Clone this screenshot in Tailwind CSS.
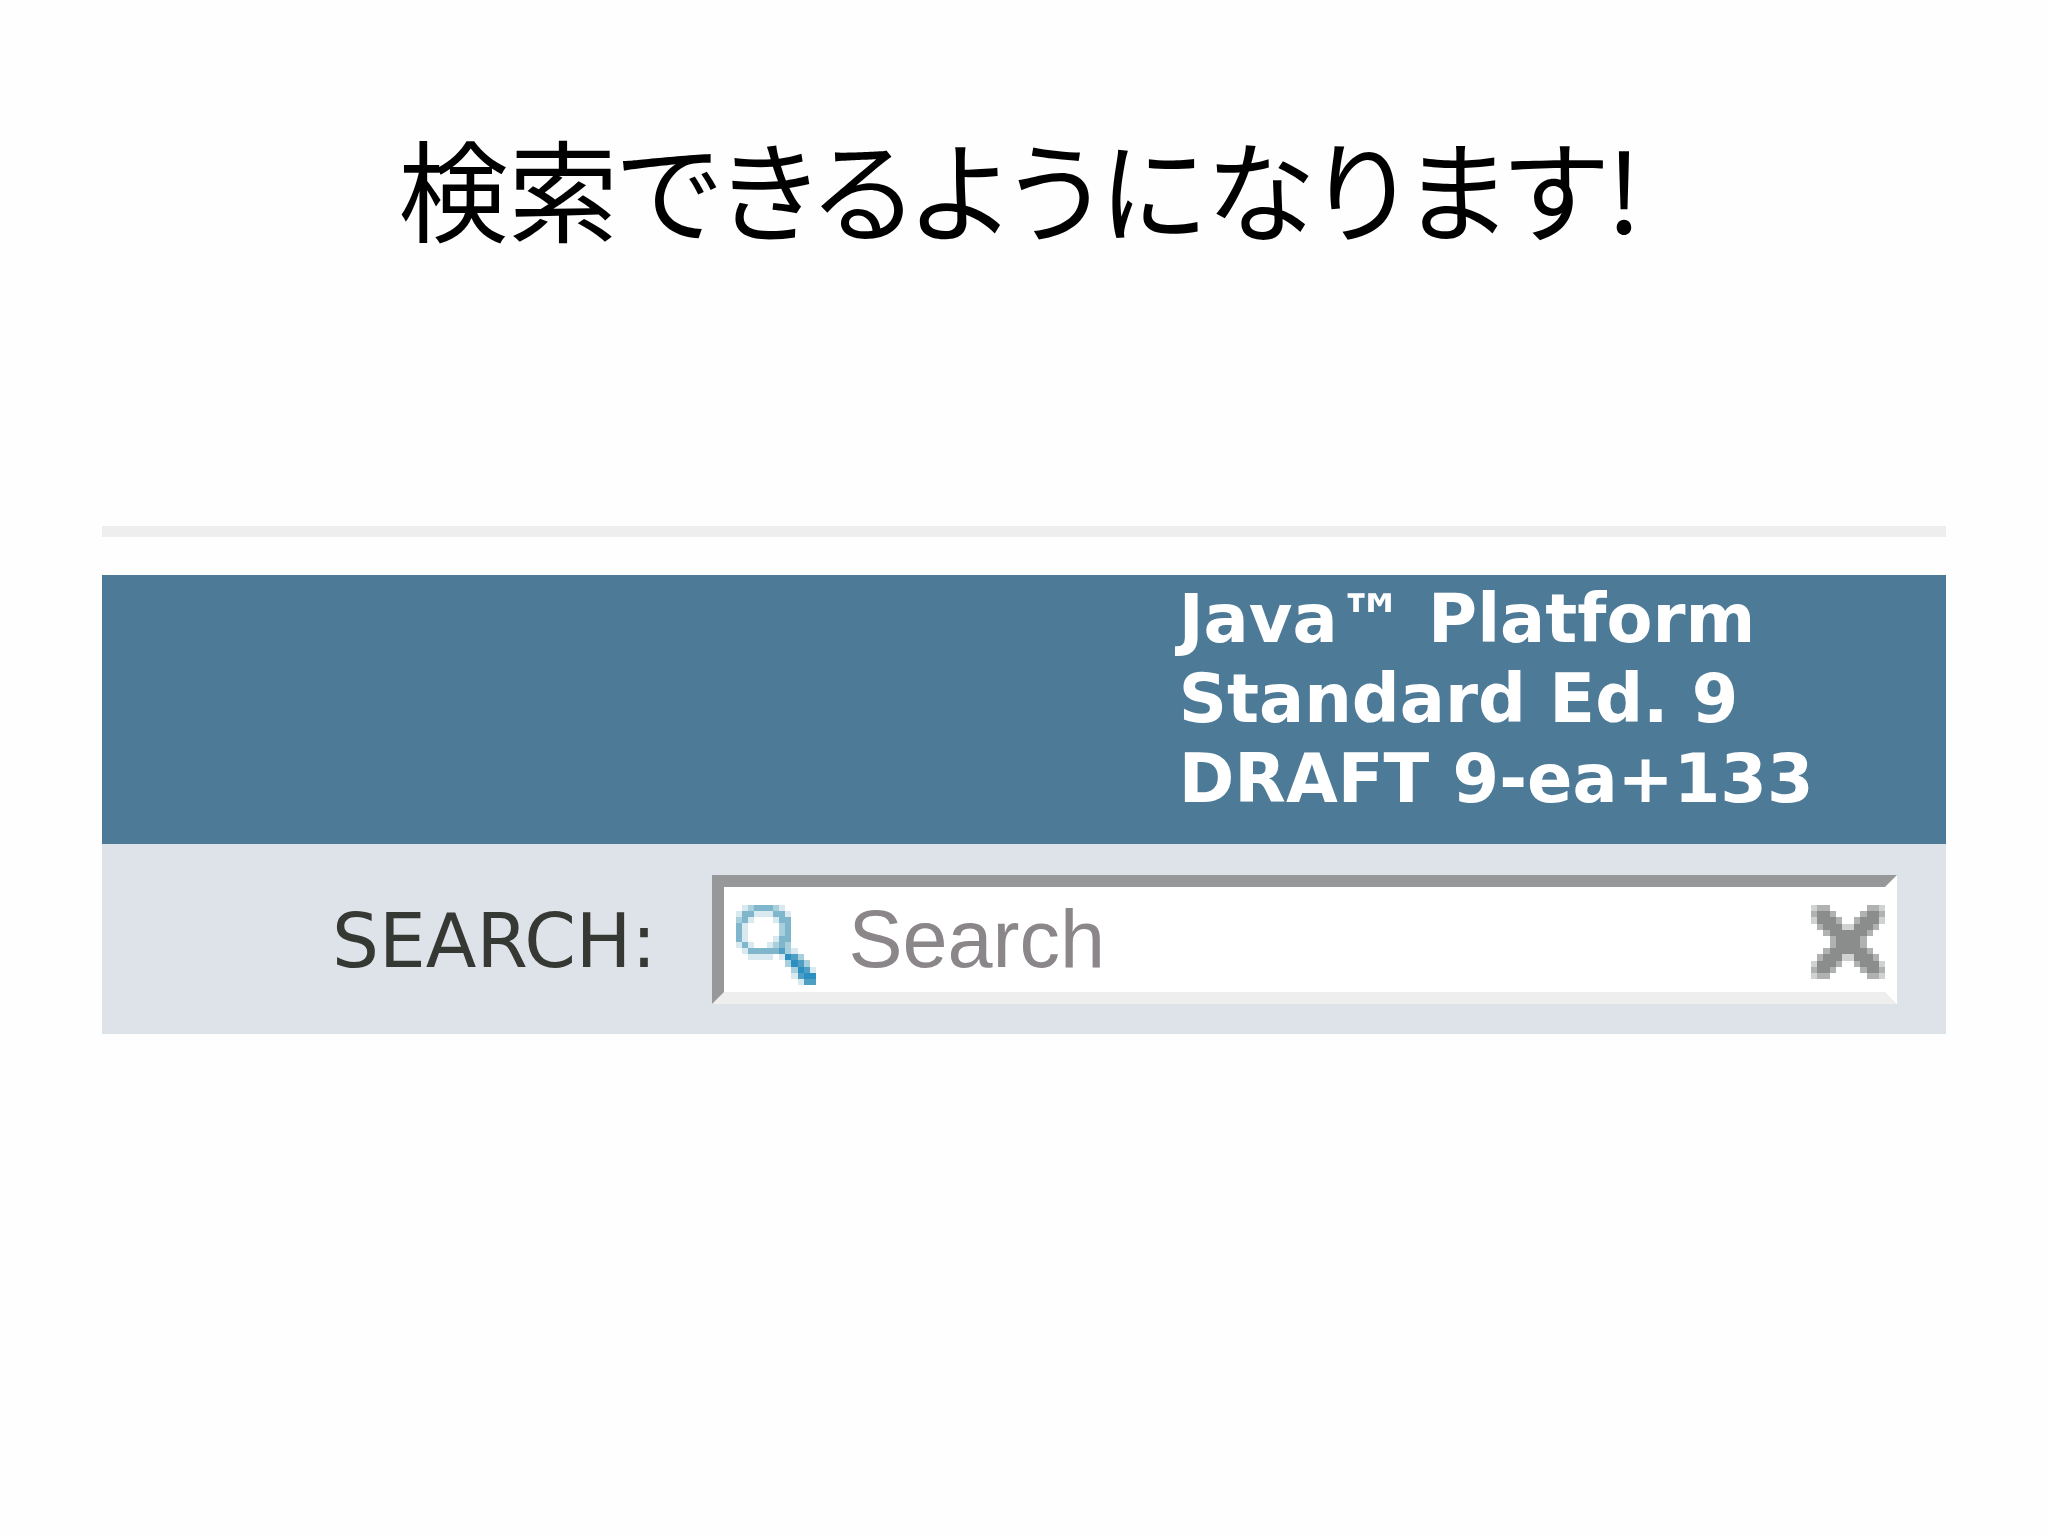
<!DOCTYPE html>
<html lang="ja">
<head>
  <meta charset="UTF-8" />
  <meta name="viewport" content="width=device-width, initial-scale=1" />
  <title>検索できるようになります!</title>
  <script src="https://cdn.jsdelivr.net/npm/@tailwindcss/browser@4"></script>
</head>
<body class="bg-[#fefefe] min-h-screen px-[5%] pt-[106px]">

  <h1 class="pr-2 text-center text-[110px] leading-[160px] text-black font-['Noto_Sans_CJK_JP',sans-serif] [font-feature-settings:'palt']">検索できるようになります!</h1>

  <main class="mt-[260px]">
    <hr class="h-[11px] border-0 bg-[#eeeeee]" />

    <header class="mt-[38px] flex h-[269px] justify-end bg-[#4d7a97] pt-1 pr-[132px]">
      <div class="font-['DejaVu_Sans',sans-serif] text-[67px] leading-[80px] font-bold text-white whitespace-nowrap">
        Java™ Platform<br />
        Standard Ed. 9<br />
        DRAFT 9-ea+133
      </div>
    </header>

    <form class="flex h-[190px] items-center justify-end bg-[#dee3e9] pr-[49px]" onsubmit="return false">
      <label for="search" class="mr-[56px] pt-1 font-['DejaVu_Sans',sans-serif] text-[74px] leading-[104px] text-[#353833]">SEARCH:</label>

      <div class="flex h-[129px] w-[66%] items-start border-[12px] border-t-[#979899] border-r-white border-b-[#eeeeee] border-l-[#979899] bg-white pl-3">
        <!-- magnifier, 13x13 grid -->
        <svg class="mt-[18px] h-[80px] w-[80px] shrink-0" viewBox="0 0 13 13" shape-rendering="crispEdges" aria-hidden="true">
          <path fill="#d9e9f0" d="M1 0h1v1h-1zM7 0h1v1h-1zM0 1h1v1h-1zM3 1h3v1h-3zM8 1h1v1h-1zM2 2h1v1h-1zM6 2h1v1h-1zM1 3h1v3h-1zM6 5h1v1h-1zM2 6h1v1h-1zM5 6h1v1h-1zM0 6h1v1h-1zM1 7h1v1h-1zM2 8h4v1h-4zM9 7h1v1h-1zM7 8h1v1h-1zM12 10h1v1h-1zM9 11h1v1h-1zM10 12h1v1h-1z" />
          <path fill="#a8cfdc" d="M2 0h1v1h-1zM6 0h1v1h-1zM0 2h1v1h-1zM7 3h1v2h-1zM6 6h1v1h-1zM8 6h1v1h-1zM8 7h1v1h-1zM10 8h1v1h-1zM8 9h1v1h-1zM9 10h1v1h-1zM11 9h1v1h-1z" />
          <path fill="#7fb6cb" d="M3 0h3v1h-3zM1 1h2v1h-2zM6 1h2v1h-2zM1 2h1v1h-1zM7 2h2v1h-2zM8 3h1v3h-1zM7 5h1v2h-1zM0 3h1v3h-1zM1 6h1v1h-1zM2 7h5v1h-5z" />
          <path fill="#4f9fc5" d="M7 7h1v1h-1zM9 8h1v1h-1zM10 9h1v1h-1zM11 10h1v1h-1zM10 11h1v1h-1zM11 12h2v1h-2z" />
          <path fill="#2b8fc2" d="M8 8h1v1h-1zM9 9h1v1h-1zM10 10h1v1h-1zM11 11h2v1h-2z" />
        </svg>
        <input id="search" type="text" placeholder="Search" class="ml-8 h-[106px] min-w-0 flex-1 bg-transparent font-['Liberation_Sans',sans-serif] text-[81px] text-[#353833] outline-none placeholder:text-[#8b8689]" />
        <button type="reset" aria-label="Clear" class="mt-[18px] shrink-0">
          <svg class="block h-[74px] w-[74px]" viewBox="0 0 12 12" shape-rendering="crispEdges">
            <path fill="#d0d1d1" d="M0 0h1v1h-1zM11 0h1v1h-1zM0 11h1v1h-1zM11 11h1v1h-1zM0 2h1v1h-1zM11 2h1v1h-1zM0 9h1v1h-1zM11 9h1v1h-1zM5 3h2v1h-2zM5 8h2v1h-2z" />
            <path fill="#b0b1b1" d="M1 0h2v1h-2zM9 0h2v1h-2zM0 1h1v1h-1zM3 1h1v1h-1zM8 1h1v1h-1zM11 1h1v1h-1zM4 2h1v1h-1zM7 2h1v1h-1zM1 3h1v1h-1zM10 3h1v1h-1zM2 4h1v1h-1zM9 4h1v1h-1zM3 5h1v2h-1zM8 5h1v2h-1zM2 7h1v1h-1zM9 7h1v1h-1zM1 8h1v1h-1zM10 8h1v1h-1zM4 9h1v1h-1zM7 9h1v1h-1zM0 10h1v1h-1zM3 10h1v1h-1zM8 10h1v1h-1zM11 10h1v1h-1zM1 11h2v1h-2zM9 11h2v1h-2z" />
            <path fill="#8b8d8d" d="M1 1h2v1h-2zM9 1h2v1h-2zM1 2h3v1h-3zM8 2h3v1h-3zM2 3h3v1h-3zM7 3h3v1h-3zM3 4h6v1h-6zM4 5h4v2h-4zM3 7h6v1h-6zM2 8h3v1h-3zM7 8h3v1h-3zM1 9h3v1h-3zM8 9h3v1h-3zM1 10h2v1h-2zM9 10h2v1h-2z" />
          </svg>
        </button>
      </div>
    </form>
  </main>

</body>
</html>
